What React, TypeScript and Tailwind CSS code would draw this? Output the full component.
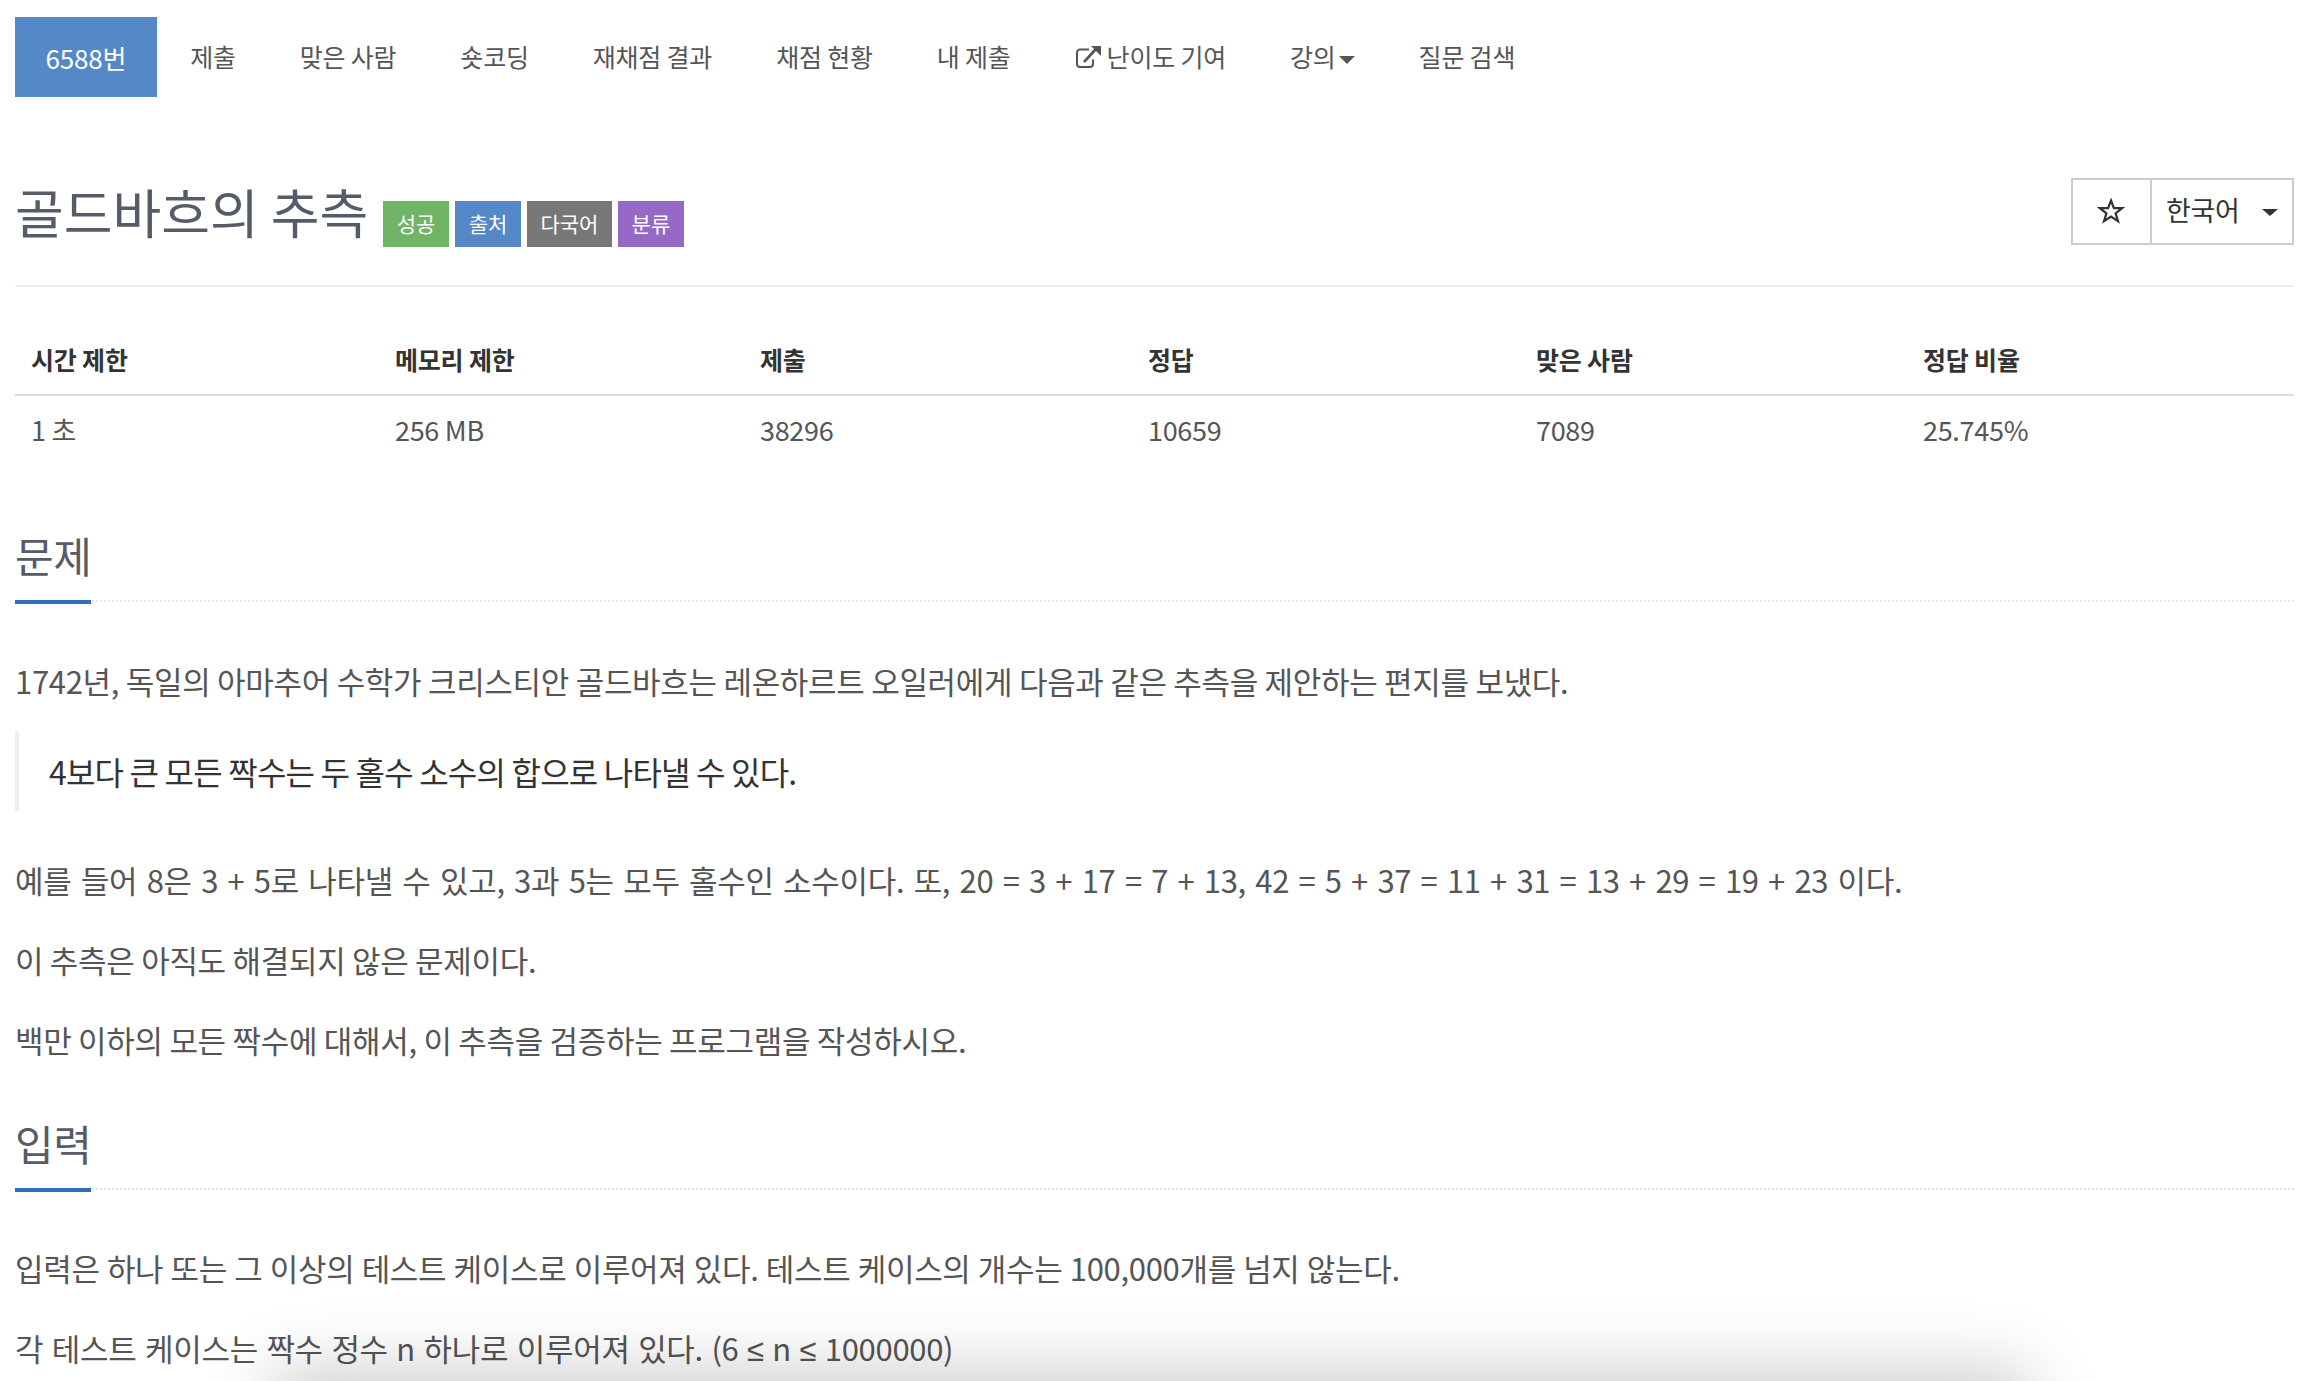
import React from "react";

const font = "font-['Noto_Sans_CJK_KR','Noto_Sans',sans-serif]";

function ExtLink() {
  return (
    <svg width="27" height="24" viewBox="0 0 27 24" className="mr-[5px]" fill="none">
      <path d="M18 14.5V19a3 3 0 0 1-3 3H5a3 3 0 0 1-3-3V7.5a3 3 0 0 1 3-3h9" stroke="#555" strokeWidth="2" />
      <path d="M9 17 L21 4" stroke="#555" strokeWidth="2.6" />
      <path d="M16 1 H26 V11 Z" fill="#555" />
    </svg>
  );
}

function NavItem({ children }: { children: React.ReactNode }) {
  return <div className="flex items-center px-[32px] whitespace-nowrap">{children}</div>;
}

function Label({ bg, children }: { bg: string; children: string }) {
  return (
    <span className={`${bg} h-[46px] px-[13.6px] flex items-center text-white text-[21px]`}>
      {children}
    </span>
  );
}

function SectionHeading({ children }: { children: string }) {
  return (
    <div className="relative border-b-2 border-dotted border-[#e4e6ea] h-[77px]">
      <h2 className="text-[42px] leading-[60px] text-[#555c68] tracking-[-0.5px]">{children}</h2>
      <div className="absolute left-0 bottom-[-4px] w-[76px] h-[4px] bg-[#2f6fb8]" />
    </div>
  );
}

function P({ children, className = "" }: { children: React.ReactNode; className?: string }) {
  return <p className={`text-[31px] leading-[50px] text-[#555] tracking-[-0.3px] whitespace-nowrap ${className}`}>{children}</p>;
}

const Le = () => <span className="font-['Liberation_Sans',sans-serif]">≤</span>;

export default function App() {
  const cols = [
    { w: "w-[364px]", h: "시간 제한", v: "1 초" },
    { w: "w-[365px]", h: "메모리 제한", v: "256 MB" },
    { w: "w-[388px]", h: "제출", v: "38296" },
    { w: "w-[388px]", h: "정답", v: "10659" },
    { w: "w-[387px]", h: "맞은 사람", v: "7089" },
    { w: "flex-1", h: "정답 비율", v: "25.745%" },
  ];
  return (
    <div className={`relative h-[1381px] w-[2300px] overflow-hidden bg-white ${font}`}>
      <div className="pl-[15px] pr-[6px]">
        <nav className="flex h-[80px] mt-[17px] text-[25px] text-[#555] tracking-[-0.2px]">
          <div className="flex items-center px-[30.5px] mr-[1.5px] bg-[#5488c7] text-white text-[26px] whitespace-nowrap">6588번</div>
          <NavItem>제출</NavItem>
          <NavItem>맞은 사람</NavItem>
          <NavItem>숏코딩</NavItem>
          <NavItem>재채점 결과</NavItem>
          <NavItem>채점 현황</NavItem>
          <NavItem>내 제출</NavItem>
          <NavItem><ExtLink />난이도 기여</NavItem>
          <NavItem>강의<span className="ml-[3px] mt-[6px] border-x-[8px] border-x-transparent border-t-[8px] border-t-[#555]" /></NavItem>
          <NavItem>질문 검색</NavItem>
        </nav>

        <div className="flex items-start justify-between h-[111px] mt-[77px] box-content border-b-2 border-[#eee]">
          <div className="flex items-end mt-[4px]">
            <h1 className="text-[53px] leading-[66px] text-[#555c68] mb-[3px]">골드바흐의 추측</h1>
            <div className="flex gap-[6px] ml-[15px]">
              <Label bg="bg-[#70b466]">성공</Label>
              <Label bg="bg-[#5488c7]">출처</Label>
              <Label bg="bg-[#777]">다국어</Label>
              <Label bg="bg-[#9569c5]">분류</Label>
            </div>
          </div>
          <div className="flex h-[67px] w-[223px] border-2 border-[#ccc] text-[#333] text-[27px] mt-[4px]">
            <div className="w-[79px] flex items-center justify-center border-r-2 border-[#ccc]">
              <svg width="28" height="28" viewBox="0 0 28 28" fill="none" className="-translate-x-[1px] -translate-y-[1px]">
                <path d="M14 3.5 L16.9 11.2 L25 11.2 L18.6 16.3 L21 24.2 L14 19.6 L7 24.2 L9.4 16.3 L3 11.2 L11.1 11.2 Z" stroke="#333" strokeWidth="2.2" />
              </svg>
            </div>
            <div className="flex-1 flex items-center justify-between pl-[14px] pr-[14px] pb-[2px] tracking-[-0.4px]">
              <span>한국어</span>
              <span className="mt-[3px] border-x-[8px] border-x-transparent border-t-[7px] border-t-[#333]" />
            </div>
          </div>
        </div>

        <div className="mt-[38px] text-[25px] text-[#333] tracking-[-0.2px]">
          <div className="flex h-[71px] border-b-2 border-[#ddd] font-bold items-center">
            {cols.map((c) => (
              <div key={c.h} className={`${c.w} pl-[16px]`}>{c.h}</div>
            ))}
          </div>
          <div className="flex h-[68px] items-center text-[#555] text-[27px] tracking-[-0.3px]">
            {cols.map((c) => (
              <div key={c.h} className={`${c.w} pl-[16px]`}>{c.v}</div>
            ))}
          </div>
        </div>

        <div className="mt-[61px]">
          <SectionHeading>문제</SectionHeading>
        </div>
        <P className="mt-[54px]">1742년, 독일의 아마추어 수학가 크리스티안 골드바흐는 레온하르트 오일러에게 다음과 같은 추측을 제안하는 편지를 보냈다.</P>
        <blockquote className="mt-[25px] h-[80px] border-l-[4px] border-[#eee] pl-[30px] flex items-center text-[32px] text-[#333] tracking-[-0.8px]">
          4보다 큰 모든 짝수는 두 홀수 소수의 합으로 나타낼 수 있다.
        </blockquote>
        <P className="mt-[44px] [word-spacing:2.75px]">예를 들어 8은 3 + 5로 나타낼 수 있고, 3과 5는 모두 홀수인 소수이다. 또, 20 = 3 + 17 = 7 + 13, 42 = 5 + 37 = 11 + 31 = 13 + 29 = 19 + 23 이다.</P>
        <P className="mt-[30px]">이 추측은 아직도 해결되지 않은 문제이다.</P>
        <P className="mt-[30px]">백만 이하의 모든 짝수에 대해서, 이 추측을 검증하는 프로그램을 작성하시오.</P>

        <div className="mt-[48px]">
          <SectionHeading>입력</SectionHeading>
        </div>
        <P className="mt-[53px] [word-spacing:0.6px]">입력은 하나 또는 그 이상의 테스트 케이스로 이루어져 있다. 테스트 케이스의 개수는 100,000개를 넘지 않는다.</P>
        <P className="mt-[30px] [word-spacing:1.9px]">각 테스트 케이스는 짝수 정수 n 하나로 이루어져 있다. (6 <Le /> n <Le /> 1000000)</P>
      </div>
      <div className="absolute left-[300px] top-[1400px] w-[1700px] h-[40px] shadow-[0_0_70px_30px_rgba(0,0,0,0.2)]" />
    </div>
  );
}
